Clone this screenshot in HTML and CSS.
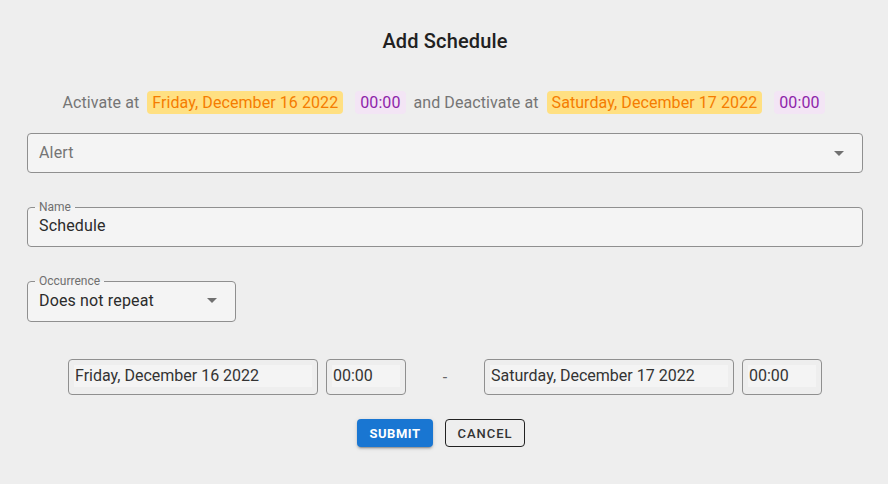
FILE: index.html
```html
<!DOCTYPE html>
<html lang="en">
<head>
<meta charset="utf-8">
<title>Add Schedule</title>
<link rel="stylesheet" href="styles.css">
</head>
<body>
<div class="dialog">
  <h2 class="title">Add Schedule</h2>

  <div class="summary">
    <span class="muted">Activate at</span>
    <span class="chip chip-date">Friday, December 16 2022</span>
    <span class="chip chip-time">00:00</span>
    <span class="muted">and Deactivate at</span>
    <span class="chip chip-date">Saturday, December 17 2022</span>
    <span class="chip chip-time">00:00</span>
  </div>

  <div class="select select-full">
    <span class="placeholder">Alert</span>
    <svg class="arrow" viewBox="0 0 24 24" width="24" height="24"><path d="M7 10l5 5 5-5z"/></svg>
  </div>

  <fieldset class="field field-full">
    <legend>Name</legend>
    <div class="value">Schedule</div>
  </fieldset>

  <fieldset class="field field-occ">
    <legend>Occurrence</legend>
    <div class="value value-select">
      <span>Does not repeat</span>
      <svg class="arrow" viewBox="0 0 24 24" width="24" height="24"><path d="M7 10l5 5 5-5z"/></svg>
    </div>
  </fieldset>

  <div class="range">
    <div class="dbox dbox-date"><div class="dinput">Friday, December 16 2022</div></div>
    <div class="dbox dbox-time"><div class="dinput">00:00</div></div>
    <div class="dash">-</div>
    <div class="dbox dbox-date"><div class="dinput">Saturday, December 17 2022</div></div>
    <div class="dbox dbox-time"><div class="dinput">00:00</div></div>
  </div>

  <div class="actions">
    <button class="btn btn-primary">Submit</button>
    <button class="btn btn-outline">Cancel</button>
  </div>
</div>
</body>
</html>
```

FILE: styles.css
```css
* { box-sizing: border-box; }

html, body {
  margin: 0;
  padding: 0;
  background: #eeeeee;
  font-family: Roboto, "Liberation Sans", Arial, sans-serif;
  color: rgba(0, 0, 0, 0.87);
}

.dialog {
  width: 888px;
  height: 484px;
  padding: 25px 25px 0 27px;
  display: flex;
  flex-direction: column;
}

.title {
  margin: 0;
  font-size: 20px;
  font-weight: 500;
  line-height: 32px;
  letter-spacing: 0.15px;
  text-align: center;
  color: #212121;
}

.summary {
  margin-top: 34px;
  display: flex;
  justify-content: center;
  align-items: center;
  font-size: 16px;
  line-height: 23px;
  height: 23px;
  letter-spacing: 0.08px;
  padding-right: 3px;
}

.muted { color: #757575; }

.chip {
  padding: 0 5px;
  border-radius: 4px;
}

.chip-date {
  background: #ffe082;
  color: #f57c00;
  margin-left: 8px;
}

.chip-time {
  background: #f3e5f5;
  color: #8e24aa;
  margin-left: 12px;
  margin-right: 8px;
}

.summary .chip-time:last-child { margin-right: 0; }

.select {
  margin-top: 19px;
  height: 40px;
  border: 1px solid #8f8f8f;
  border-radius: 4px;
  background: #f4f4f4;
  display: flex;
  align-items: center;
  padding: 0 11px 1px 11px;
  font-size: 16px;
  letter-spacing: 0.15px;
}

.placeholder {
  flex: 1;
  color: #757575;
}

.arrow {
  fill: #707070;
  flex: none;
}

.field {
  margin: 28px 0 0;
  padding: 1px 11px 9px 11px;
  border: 1px solid #8f8f8f;
  border-radius: 4px;
  background: #f4f4f4;
  min-width: 0;
}

.field legend {
  font-size: 12px;
  line-height: 12px;
  color: #6f6f6f;
  padding: 0 4px;
  margin-left: -4px;
}

.field-occ {
  width: 209px;
}

.value {
  font-size: 16px;
  line-height: 23px;
  color: #2b2b2b;
  letter-spacing: 0.15px;
}

.value-select {
  display: flex;
  align-items: center;
  justify-content: space-between;
}

.range {
  margin-top: 37px;
  display: flex;
  justify-content: center;
  align-items: center;
}

.dbox {
  height: 36px;
  border: 1px solid #8f8f8f;
  border-radius: 4px;
  padding: 5px 5px 7px 5px;
}

.dbox-date { width: 250px; }
.dbox-time { width: 80px; margin-left: 8px; }

.dinput {
  height: 22px;
  line-height: 22px;
  background: #f4f4f4;
  padding-left: 1px;
  font-size: 16px;
  color: #333;
  white-space: nowrap;
  overflow: hidden;
}

.dash {
  width: 78px;
  text-align: center;
  font-size: 16px;
  color: #666;
  padding-top: 1px;
}

.actions {
  margin-top: 24px;
  display: flex;
  justify-content: center;
  gap: 12px;
  padding-right: 8px;
}

.btn {
  height: 28px;
  border-radius: 4px;
  font-family: Roboto, "Liberation Sans", Arial, sans-serif;
  font-size: 13px;
  text-transform: uppercase;
  cursor: pointer;
  padding: 0;
}

.btn-primary {
  width: 76px;
  background: #1976d2;
  color: #fff;
  border: none;
  font-weight: 700;
  letter-spacing: 0.5px;
  box-shadow: 0 3px 1px -2px rgba(0,0,0,0.2), 0 2px 2px 0 rgba(0,0,0,0.14), 0 1px 5px 0 rgba(0,0,0,0.12);
}

.btn-outline {
  width: 80px;
  background: transparent;
  color: #333;
  border: 1px solid #222;
  font-weight: 500;
  letter-spacing: 1px;
}
```
